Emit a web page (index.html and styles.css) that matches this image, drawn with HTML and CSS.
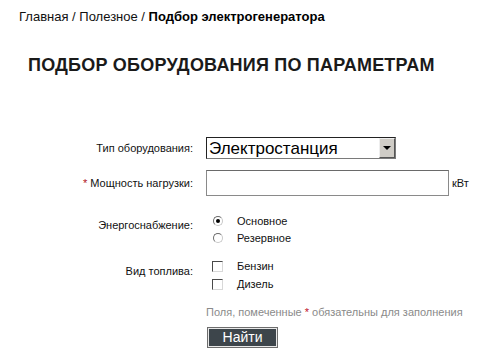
FILE: index.html
```html
<!DOCTYPE html>
<html lang="ru">
<head>
<meta charset="utf-8">
<title>Подбор оборудования</title>
<link rel="stylesheet" href="styles.css">
</head>
<body>
<div class="page">
  <div class="crumbs"><a class="crumb">Главная</a> / <a class="crumb">Полезное</a> / <b>Подбор электрогенератора</b></div>
  <h1 class="title">ПОДБОР ОБОРУДОВАНИЯ ПО ПАРАМЕТРАМ</h1>
  <form class="form">
    <div class="row row-select">
      <label class="lbl">Тип оборудования:</label>
      <div class="ctl">
        <div class="select-wrap">
          <select class="select"><option>Электростанция</option></select>
          <span class="select-btn"><span class="tri"></span></span>
        </div>
      </div>
    </div>
    <div class="row row-input">
      <label class="lbl"><span class="req">*</span> Мощность нагрузки:</label>
      <div class="ctl ctl-input">
        <input class="text" type="text">
        <span class="unit">кВт</span>
      </div>
    </div>
    <div class="row row-group row-radio">
      <label class="lbl lbl-group">Энергоснабжение:</label>
      <div class="ctl group">
        <label class="opt"><input class="radio" type="radio" name="p" checked><span>Основное</span></label>
        <label class="opt"><input class="radio" type="radio" name="p"><span>Резервное</span></label>
      </div>
    </div>
    <div class="row row-group row-check">
      <label class="lbl lbl-group">Вид топлива:</label>
      <div class="ctl group">
        <label class="opt"><input class="check" type="checkbox"><span>Бензин</span></label>
        <label class="opt"><input class="check" type="checkbox"><span>Дизель</span></label>
      </div>
    </div>
    <div class="row row-note">
      <span class="lbl"></span>
      <div class="ctl note">Поля, помеченные <span class="req">*</span> обязательны для заполнения</div>
    </div>
    <div class="row row-btn">
      <span class="lbl"></span>
      <div class="ctl"><button class="btn" type="button">Найти</button></div>
    </div>
  </form>
</div>
</body>
</html>
```

FILE: styles.css
```css
* { box-sizing: border-box; }
html, body { margin: 0; padding: 0; background: #fff; }
body {
  font-family: "Liberation Sans", Arial, sans-serif;
  color: #000;
}
.page {
  padding: 10px 0 0 19px;
}
.crumbs {
  font-size: 13px;
  line-height: 14px;
  color: #111;
}
.crumb { color: #111; text-decoration: none; }
.crumbs b { font-weight: bold; color: #000; }
.title {
  margin: 30px 0 0 9px;
  font-size: 18px;
  line-height: 22px;
  letter-spacing: 0.2px;
  font-weight: bold;
  color: #1a1a1a;
}
.form {
  margin: 61px 0 0 0;
}
.row {
  display: grid;
  grid-template-columns: 174px auto;
  column-gap: 13px;
  align-items: center;
}
.lbl {
  text-align: right;
  font-size: 11px;
  line-height: 14px;
  color: #111;
}
.req { color: #b0101a; }
.row-input { margin-top: 11px; }
.row-radio { margin-top: 16px; }
.row-check { margin-top: 11px; }
.row-note { margin-top: 12px; }
.row-btn { margin-top: 8px; }
.lbl-group { align-self: start; }
.row-radio .lbl-group { margin-top: 6px; }
.row-check .lbl-group { margin-top: 7px; }

.select-wrap {
  position: relative;
  width: 190px;
  height: 22px;
}
.select {
  appearance: none;
  -webkit-appearance: none;
  width: 190px;
  height: 22px;
  margin: 0;
  padding: 0 0 0 2px;
  border: 1px solid #7a7a7a;
  border-top-color: #222;
  border-left-color: #222;
  border-radius: 0;
  background: #fff;
  font-family: "Liberation Sans", Arial, sans-serif;
  font-size: 17px;
  color: #000;
  outline: none;
}
.select-btn {
  position: absolute;
  right: 1px;
  top: 1px;
  width: 16px;
  height: 20px;
  background: #cfccc6;
  border-left: 1px solid #eee;
  border-top: 1px solid #eee;
  border-right: 1px solid #555;
  border-bottom: 1px solid #555;
  display: flex;
  align-items: center;
  justify-content: center;
}
.tri {
  width: 0;
  height: 0;
  border-left: 4px solid transparent;
  border-right: 4px solid transparent;
  border-top: 4px solid #000;
}
.ctl-input {
  display: flex;
  align-items: center;
}
.text {
  width: 243px;
  height: 26px;
  margin: 0;
  border: 1px solid #8a8a8a;
  border-top-color: #6a6a6a;
  border-radius: 0;
  background: #fff;
  outline: none;
  padding: 0 3px;
}
.unit {
  margin-left: 3px;
  font-size: 11px;
  color: #111;
}
.group {
  display: flex;
  flex-direction: column;
}
.opt {
  display: flex;
  align-items: center;
  height: 17px;
  font-size: 11px;
  color: #111;
}
.row-check .opt { height: 18px; }
.radio {
  appearance: none;
  -webkit-appearance: none;
  width: 10px;
  height: 10px;
  margin: 0 14px 0 7px;
  border-radius: 50%;
  border: 1px solid #c8c8c8;
  border-top-color: #6a6a6a;
  border-left-color: #6a6a6a;
  background: #fff;
  position: relative;
}
.radio:checked::after {
  content: "";
  position: absolute;
  left: 2px;
  top: 2px;
  width: 4px;
  height: 4px;
  border-radius: 50%;
  background: #000;
}
.check {
  appearance: none;
  -webkit-appearance: none;
  width: 11px;
  height: 11px;
  margin: 0 14px 0 6px;
  border-radius: 0;
  border: 1px solid #d8d8d8;
  border-top-color: #4a4a4a;
  border-left-color: #4a4a4a;
  background: #fff;
}
.note {
  font-size: 11px;
  line-height: 14px;
  color: #8a8a8a;
}
.note .req { color: #c0102a; }
.btn {
  width: 71px;
  height: 21px;
  margin: 0 0 0 1px;
  padding: 0;
  background: #3d454b;
  border: 1px solid #6d6d6d;
  box-shadow: inset 0 0 0 1px #e8e8e8;
  color: #fff;
  font-family: "Liberation Sans", Arial, sans-serif;
  font-size: 14px;
  font-weight: normal;
  line-height: 17px;
  border-radius: 0;
}
```
